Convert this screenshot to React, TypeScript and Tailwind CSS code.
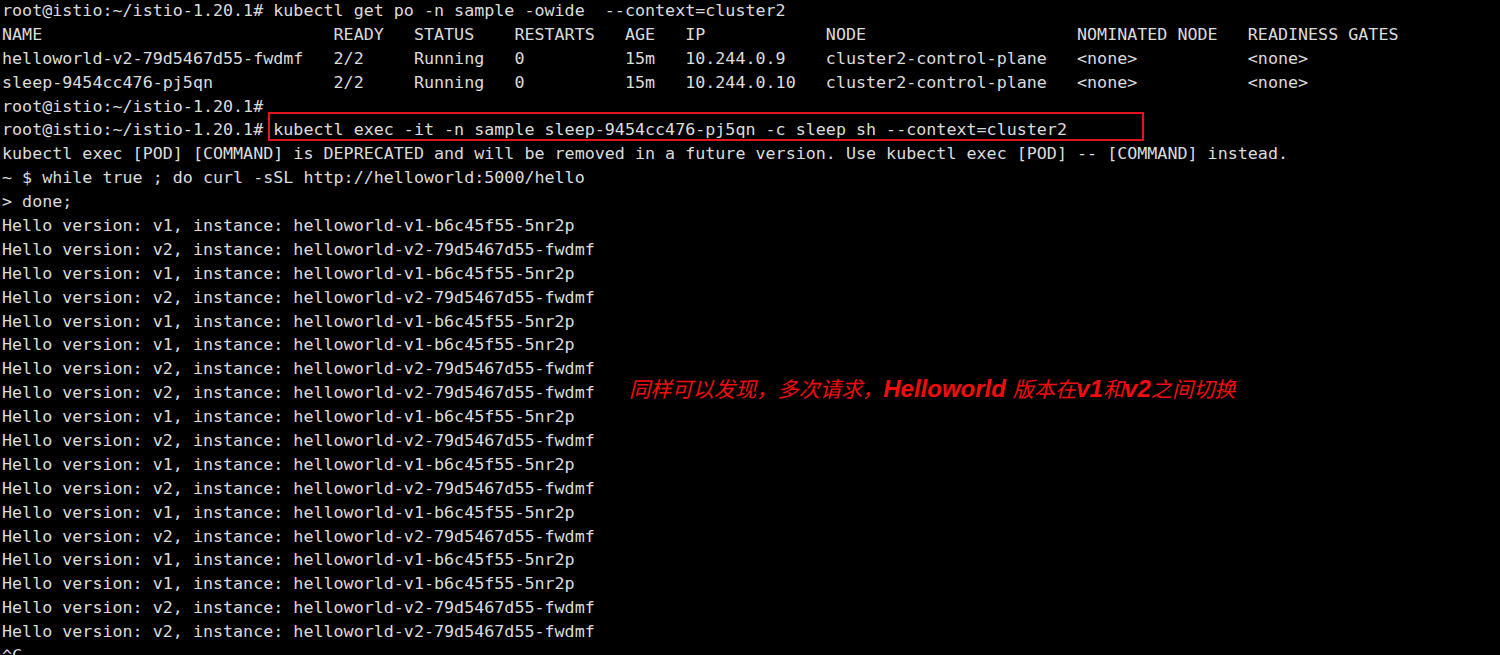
const hello = ["v1", "v2", "v1", "v2", "v1", "v1", "v2", "v2", "v1", "v2", "v1", "v2", "v1", "v2", "v1", "v1", "v2", "v2"];

const instance: Record<string, string> = {
  v1: "helloworld-v1-b6c45f55-5nr2p",
  v2: "helloworld-v2-79d5467d55-fwdmf",
};

const prompt = "root@istio:~/istio-1.20.1#";

const Line: React.FC<{ children?: React.ReactNode }> = ({ children }) => (
  <div className="relative h-[23.9px] whitespace-pre">{children}</div>
);

const Bold: React.FC<{ children: React.ReactNode }> = ({ children }) => (
  <b className="font-['Liberation_Sans',sans-serif] text-[24px] font-bold">{children}</b>
);

export default function App() {
  return (
    <div className="h-[655px] w-[1500px] overflow-hidden bg-black">
      <div className="-mt-[1px] pl-[2px] font-['DejaVu_Sans_Mono','Liberation_Mono',monospace] text-[16.7px] leading-[23.9px] text-[#dcdcdc]">
        <Line>{prompt} kubectl get po -n sample -owide  --context=cluster2</Line>
        <Line>NAME                             READY   STATUS    RESTARTS   AGE   IP            NODE                     NOMINATED NODE   READINESS GATES</Line>
        <Line>helloworld-v2-79d5467d55-fwdmf   2/2     Running   0          15m   10.244.0.9    cluster2-control-plane   {"<none>"}           {"<none>"}</Line>
        <Line>sleep-9454cc476-pj5qn            2/2     Running   0          15m   10.244.0.10   cluster2-control-plane   {"<none>"}           {"<none>"}</Line>
        <Line>{prompt}</Line>
        <Line>
          {prompt} kubectl exec -it -n sample sleep-9454cc476-pj5qn -c sleep sh --context=cluster2
          <span className="absolute left-[266px] top-[-6px] h-[29px] w-[876px] border-2 border-[#e3141c]" />
        </Line>
        <Line>kubectl exec [POD] [COMMAND] is DEPRECATED and will be removed in a future version. Use kubectl exec [POD] -- [COMMAND] instead.</Line>
        <Line>~ $ while true ; do curl -sSL http://helloworld:5000/hello</Line>
        <Line>{"> done;"}</Line>
        {hello.map((v, i) => (
          <Line key={i}>
            Hello version: {v}, instance: {instance[v]}
            {i === 7 && (
              <span className="absolute left-[627px] top-[-8px] font-['Noto_Sans_CJK_SC',sans-serif] text-[21.2px] leading-[30px] text-[#f20d0d] italic">
                同样可以发现，多次请求，<Bold>Helloworld </Bold>版本在<Bold>v1</Bold>和<Bold>v2</Bold>之间切换
              </span>
            )}
          </Line>
        ))}
        <Line>^C</Line>
      </div>
    </div>
  );
}
